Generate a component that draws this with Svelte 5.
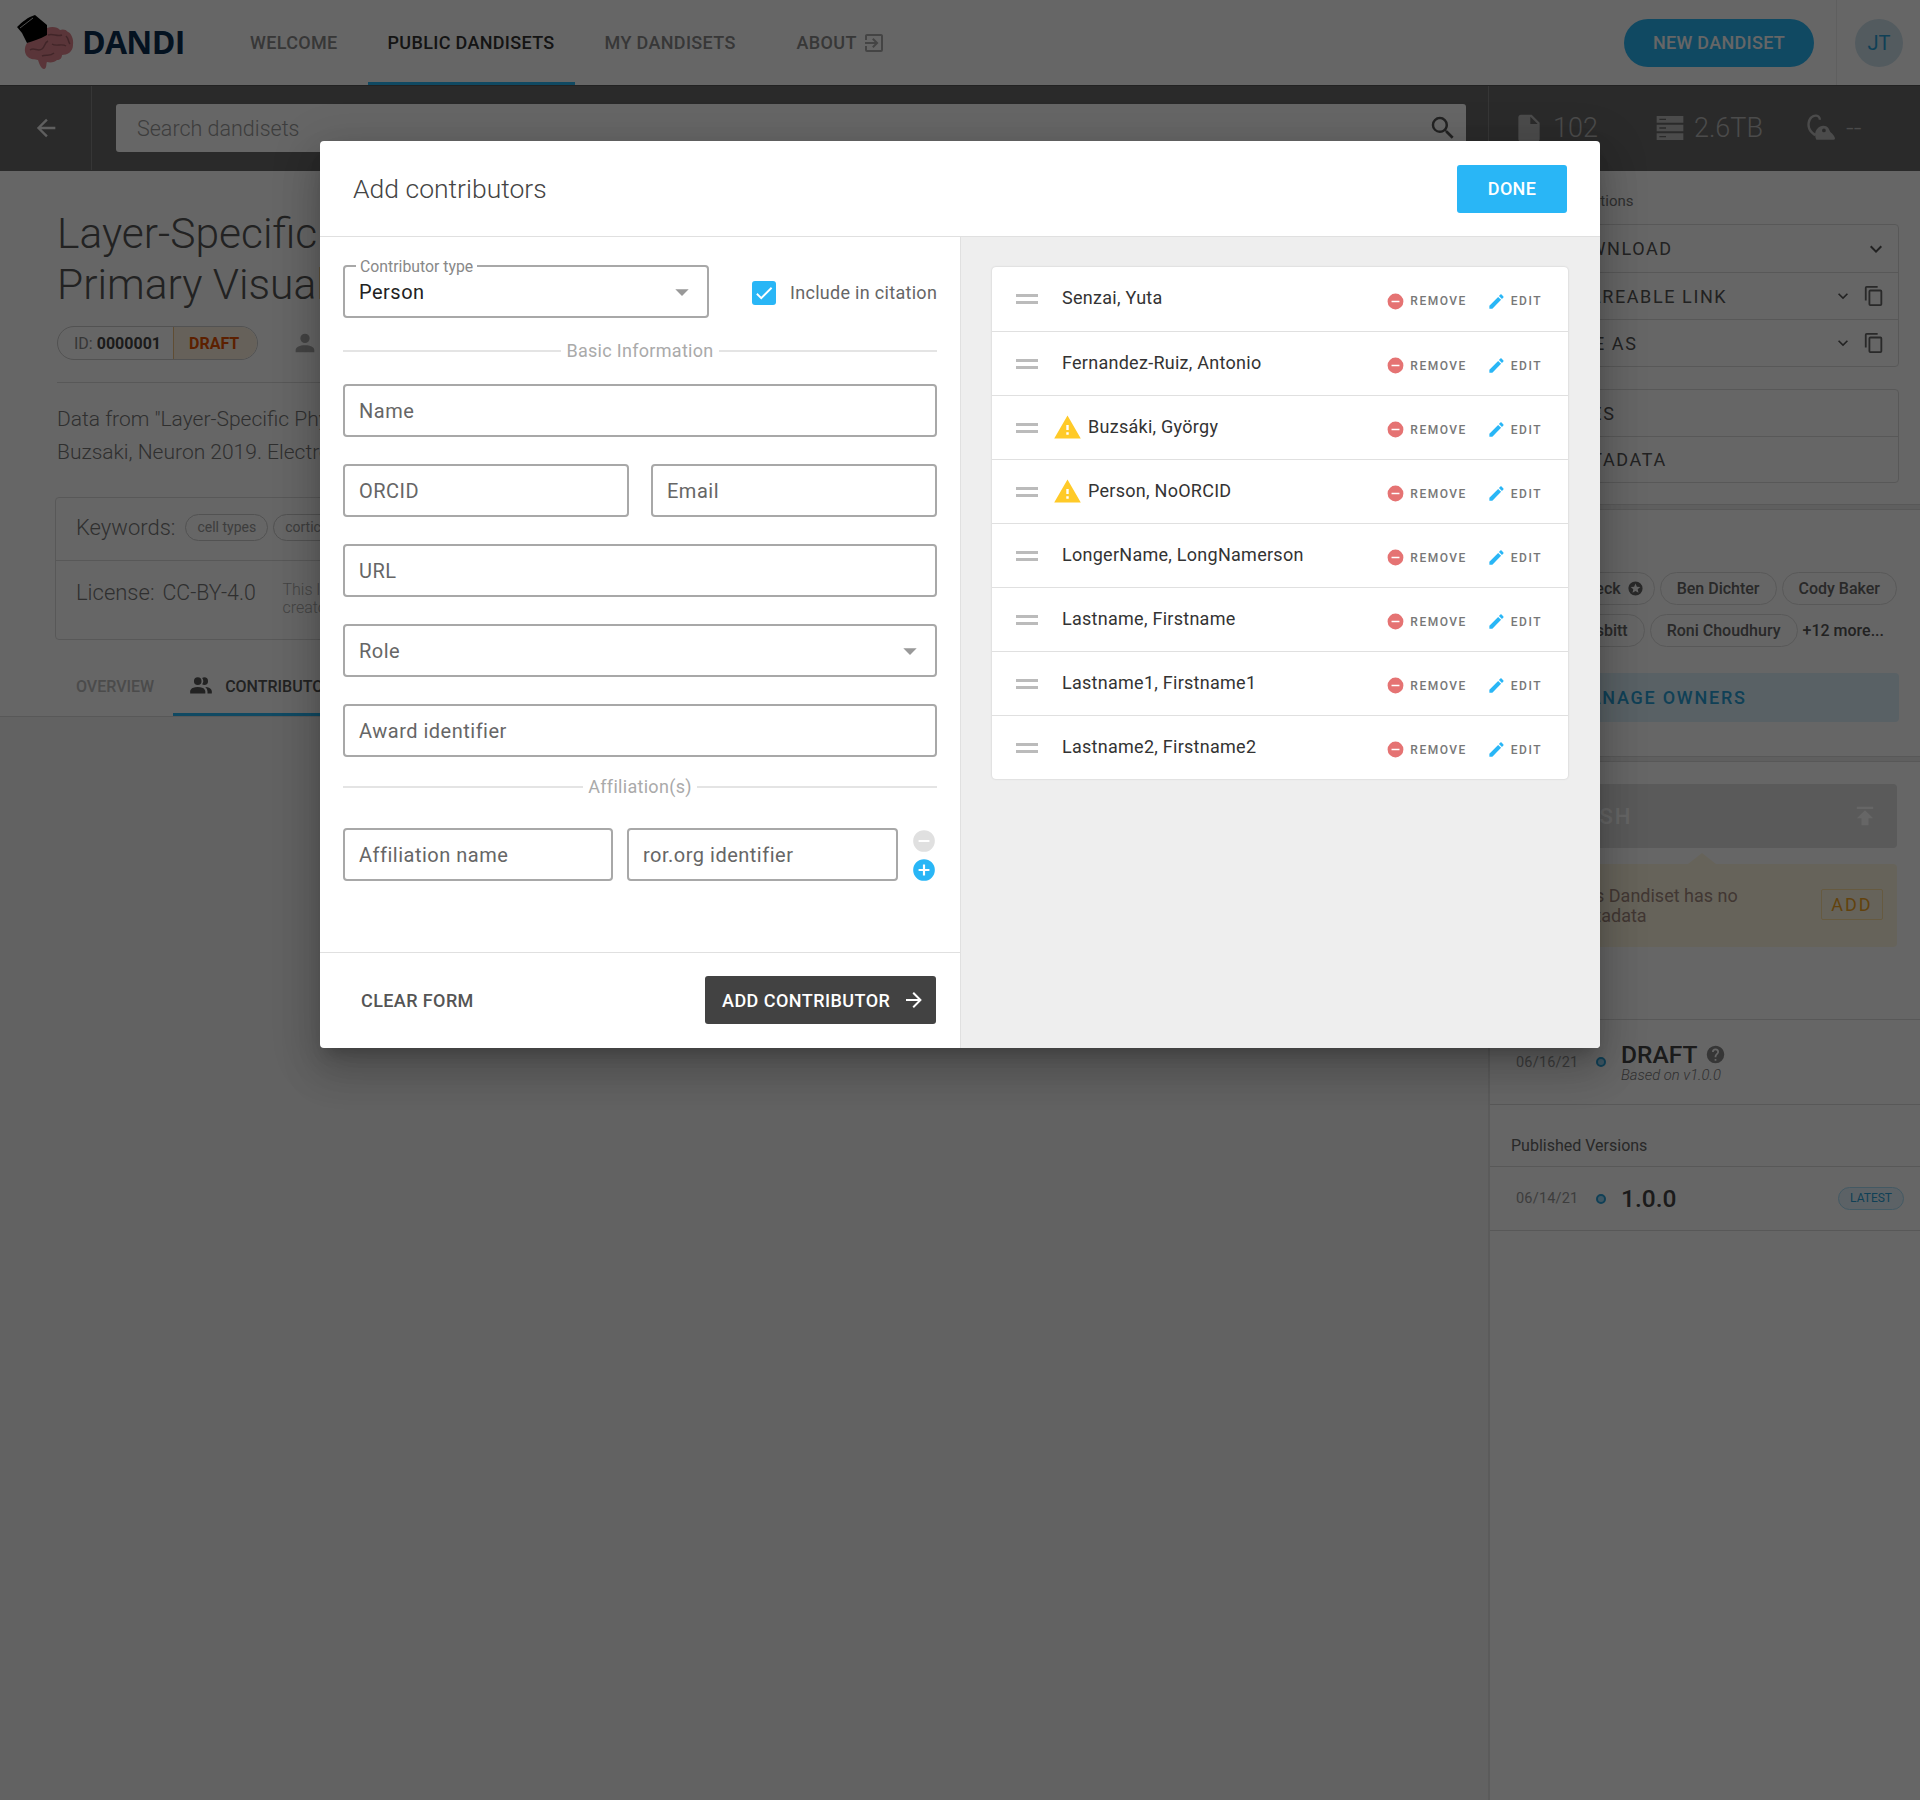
<script>
	const icons = {
		arrowLeft: 'M20,11V13H8L13.5,18.5L12.08,19.92L4.16,12L12.08,4.08L13.5,5.5L8,11H20Z',
		arrowRight: 'M4,11V13H16L10.5,18.5L11.92,19.92L19.84,12L11.92,4.08L10.5,5.5L16,11H4Z',
		search: 'M9.5,3A6.5,6.5 0 0,1 16,9.5C16,11.11 15.41,12.59 14.44,13.73L14.71,14H15.5L20.5,19L19,20.5L14,15.5V14.71L13.73,14.44C12.59,15.41 11.11,16 9.5,16A6.5,6.5 0 0,1 3,9.5A6.5,6.5 0 0,1 9.5,3M9.5,5C7,5 5,7 5,9.5C5,12 7,14 9.5,14C12,14 14,12 14,9.5C14,7 12,5 9.5,5Z',
		file: 'M13,9V3.5L18.5,9M6,2C4.89,2 4,2.89 4,4V20A2,2 0 0,0 6,22H18A2,2 0 0,0 20,20V8L14,2H6Z',
		server: 'M2,3H22V8H2V3M2,9.5H22V14.5H2V9.5M2,16H22V21H2V16M4,5V6H9V5H4M4,11.5V12.5H9V11.5H4M4,18V19H9V18H4Z',
		rodent: 'M8,22C5,16 9,10 14,10C18,10 19,13 20,15.5C22,17 24,19.5 24,21C24,22 23,22 22,22ZM14.5,12.5A1.6,1.6 0 1,0 14.5,15.7A1.6,1.6 0 1,0 14.5,12.5ZM6.5,19C2,16 -0.5,12 .5,7C1.3,2.5 5,0 8,.5C11,1 12,3 12,5L10,5C10,3.5 9.3,2.6 7.7,2.4C5.5,2.2 3.2,4 2.5,7.5C1.8,11.5 3.6,14.6 7.5,17Z',
		exit: 'M19,3H5C3.89,3 3,3.89 3,5V9H5V5H19V19H5V15H3V19A2,2 0 0,0 5,21H19A2,2 0 0,0 21,19V5C21,3.89 20.1,3 19,3M10.08,15.58L11.5,17L16.5,12L11.5,7L10.08,8.41L12.67,11H3V13H12.67L10.08,15.58Z',
		account: 'M12,4A4,4 0 0,1 16,8A4,4 0 0,1 12,12A4,4 0 0,1 8,8A4,4 0 0,1 12,4M12,14C16.42,14 20,15.79 20,18V20H4V18C4,15.79 7.58,14 12,14Z',
		accounts: 'M16 17V19H2V17S2 13 9 13 16 17 16 17M12.5 7.5A3.5 3.5 0 1 0 9 11A3.5 3.5 0 0 0 12.5 7.5M15.94 13A5.32 5.32 0 0 1 18 17V19H22V17S22 13.37 15.94 13M15 4A3.39 3.39 0 0 0 13.07 4.59A5 5 0 0 1 13.07 10.41A3.39 3.39 0 0 0 15 11A3.5 3.5 0 0 0 15 4Z',
		pencil: 'M20.71,7.04C21.1,6.65 21.1,6 20.71,5.63L18.37,3.29C18,2.9 17.35,2.9 16.96,3.29L15.12,5.12L18.87,8.87M3,17.25V21H6.75L17.81,9.93L14.06,6.18L3,17.25Z',
		minus: 'M17,13H7V11H17M12,2A10,10 0 0,0 2,12A10,10 0 0,0 12,22A10,10 0 0,0 22,12A10,10 0 0,0 12,2Z',
		plus: 'M17,13H13V17H11V13H7V11H11V7H13V11H17M12,2A10,10 0 0,0 2,12A10,10 0 0,0 12,22A10,10 0 0,0 22,12A10,10 0 0,0 12,2Z',
		alert: 'M13,14H11V10H13M13,18H11V16H13M1,21H23L12,2L1,21Z',
		check: 'M21,7L9,19L3.5,13.5L4.91,12.09L9,16.17L19.59,5.59L21,7Z',
		chevron: 'M7.41,8.58L12,13.17L16.59,8.58L18,10L12,16L6,10L7.41,8.58Z',
		copy: 'M19,21H8V7H19M19,5H8A2,2 0 0,0 6,7V21A2,2 0 0,0 8,23H19A2,2 0 0,0 21,21V7A2,2 0 0,0 19,5M16,1H4A2,2 0 0,0 2,3V17H4V3H16V1Z',
		publish: 'M5,4V6H19V4H5M5,14H9V20H15V14H19L12,7L5,14Z',
		help: 'M15.07,11.25L14.17,12.17C13.45,12.89 13,13.5 13,15H11V14.5C11,13.39 11.45,12.39 12.17,11.67L13.41,10.41C13.78,10.05 14,9.55 14,9C14,7.89 13.1,7 12,7A2,2 0 0,0 10,9H8A4,4 0 0,1 12,5A4,4 0 0,1 16,9C16,9.88 15.64,10.67 15.07,11.25M13,19H11V17H13M12,2A10,10 0 0,0 2,12A10,10 0 0,0 12,22A10,10 0 0,0 22,12C22,6.47 17.5,2 12,2Z',
		star: 'M16.23,18L12,15.45L7.77,18L8.89,13.19L5.16,9.96L10.08,9.54L12,5L13.92,9.53L18.84,9.95L15.11,13.18L16.23,18M12,2C6.47,2 2,6.47 2,12A10,10 0 0,0 12,22A10,10 0 0,0 22,12A10,10 0 0,0 12,2Z',
		caret: 'M7,10L12,15L17,10H7Z'
	};

	const contributors = [
		{ name: 'Senzai, Yuta' },
		{ name: 'Fernandez-Ruiz, Antonio' },
		{ name: 'Buzsáki, György', warn: true },
		{ name: 'Person, NoORCID', warn: true },
		{ name: 'LongerName, LongNamerson' },
		{ name: 'Lastname, Firstname' },
		{ name: 'Lastname1, Firstname1' },
		{ name: 'Lastname2, Firstname2' }
	];
</script>

{#snippet icon(name, cls)}
	<svg class="icon {cls}" viewBox="0 0 24 24" aria-hidden="true"><path d={icons[name]} /></svg>
{/snippet}

<div class="page">
	<header class="appbar">
		<svg class="logo" viewBox="0 0 76 85" aria-hidden="true">
			<path class="brain" d="M47,28C42,34 35,40 27,43C24,47 24,54 28,57C31,60 35,59 38,60C39,63 41,69 44,69C47,69 46,63 47,62C51,63 55,62 57,60C60,60 62,58 62,55C67,55 73,52 73,45C74,39 71,33 68,32C66,29 62,29 60,30C58,27 52,26 47,28Z" />
			<path class="fold" d="M30,50C34,47 38,52 42,49C45,47 44,43 48,41M48,35C53,33 57,37 62,35M52,44C56,47 62,43 66,46M42,56C46,54 50,57 54,53M66,36C69,39 68,42 70,44" />
			<path class="hat" d="M17,27C22,22 28,17 35,15L47,25L47,35C40,39 33,41 27,43L22,33Z" />
			<path class="hatband" d="M20,28L33,18" />
		</svg>
		<span class="brand">DANDI</span>
		<nav class="nav">
			<span class="tab">Welcome</span>
			<span class="tab active">Public Dandisets</span>
			<span class="tab">My Dandisets</span>
			<span class="tab about">About {@render icon('exit', 'exit')}</span>
		</nav>
		<button class="new">New Dandiset</button>
		<div class="user"><span class="avatar">JT</span></div>
	</header>

	<div class="toolbar">
		<div class="back">{@render icon('arrowLeft', 'i28')}</div>
		<div class="search">
			<span>Search dandisets</span>
			{@render icon('search', 'i30')}
		</div>
		<div class="stats">
			<span class="stat">{@render icon('file', 'i32')}102</span>
			<span class="stat second">{@render icon('server', 'i32')}2.6TB</span>
			<span class="stat third">{@render icon('rodent', 'i28')}--</span>
		</div>
	</div>

	<div class="content">
		<main>
			<section class="meta">
				<h1>Layer-Specific Physiological Features and Interlaminar Interactions in the Primary Visual Cortex</h1>
				<div class="idline">
					<span class="idchip">
						<span class="id">ID: <b>0000001</b></span>
						<span class="draft">DRAFT</span>
					</span>
					{@render icon('account', 'person')}
				</div>
				<p class="desc">Data from "Layer-Specific Physiological Features and Interlaminar Interactions in the Primary Visual Cortex", Senzai, Fernandez-Ruiz,<br />Buzsaki, Neuron 2019. Electrophysiological recordings in mice.</p>
				<div class="infobox">
					<div class="keywords">
						<span class="infolabel">Keywords:</span>
						<span class="kw">cell types</span>
						<span class="kw">cortical layers</span>
					</div>
					<div class="license">
						<span class="infolabel">License:</span>
						<span class="infovalue">CC-BY-4.0</span>
						<span class="licnote">This license allows reusers to distribute, remix and build upon the material, so long as attribution is given to the<br />creator.</span>
					</div>
				</div>
				<div class="tabs">
					<span class="ptab">Overview</span>
					<span class="ptab on">{@render icon('accounts', 'i26')}Contributors</span>
				</div>
			</section>
		</main>

		<aside>
			<section class="actions">
				<div class="actlabel">Dandiset Actions</div>
				<div class="actbox">
					<div class="actrow"><span>Download</span>{@render icon('chevron', 'i24 last')}</div>
					<div class="actrow"><span>Shareable Link</span>{@render icon('chevron', 'i20')}{@render icon('copy', 'i22 cp')}</div>
					<div class="actrow"><span>Cite As</span>{@render icon('chevron', 'i20')}{@render icon('copy', 'i22 cp')}</div>
				</div>
				<div class="actbox second">
					<div class="actrow"><span>Files</span></div>
					<div class="actrow"><span>Metadata</span></div>
				</div>
			</section>
			<div class="band"></div>
			<section class="owners">
				<div class="chips">
					<span class="chip starred">Beck {@render icon('star', 'i17')}</span>
					<span class="chip">Ben Dichter</span>
					<span class="chip">Cody Baker</span>
				</div>
				<div class="chips second">
					<span class="chip">Jacob Nesbitt</span>
					<span class="chip">Roni Choudhury</span>
					<span class="more">+12 more...</span>
				</div>
				<div class="manage">Manage Owners</div>
			</section>
			<div class="band"></div>
			<section class="publish">
				<div class="pubbtn"><span>Publish</span>{@render icon('publish', 'i28')}</div>
				<div class="notice">
					<span class="noticetext">This Dandiset has no<br />metadata</span>
					<span class="add">Add</span>
				</div>
			</section>
			<div class="version draftrow">
				<span class="date">06/16/21</span>
				<span class="dot"></span>
				<div>
					<div class="vname">DRAFT {@render icon('help', 'i21')}</div>
					<div class="based">Based on v1.0.0</div>
				</div>
			</div>
			<div class="pubhead">Published Versions</div>
			<div class="version">
				<span class="date">06/14/21</span>
				<span class="dot"></span>
				<span class="vname">1.0.0</span>
				<span class="latest">Latest</span>
			</div>
		</aside>
	</div>

	<div class="overlay">
		<div class="modal">
			<div class="modalhead">
				<h2>Add contributors</h2>
				<button class="done">Done</button>
			</div>
			<div class="modalbody">
				<div class="left">
					<form class="form">
						<div class="typeline">
							<fieldset class="select">
								<legend>Contributor type</legend>
								<span class="value">Person</span>
								{@render icon('caret', 'i32 caret')}
							</fieldset>
							<label class="citation">
								<span class="checkbox">{@render icon('check', 'i22')}</span>
								Include in citation
							</label>
						</div>
						<div class="rule first"><span>Basic Information</span></div>
						<div class="field">Name</div>
						<div class="pair">
							<div class="field">ORCID</div>
							<div class="field">Email</div>
						</div>
						<div class="field">URL</div>
						<div class="field role">Role {@render icon('caret', 'i32 caret')}</div>
						<div class="field">Award identifier</div>
						<div class="rule"><span>Affiliation(s)</span></div>
						<div class="affil">
							<div class="field">Affiliation name</div>
							<div class="field">ror.org identifier</div>
							<div class="affilbtns">
								{@render icon('minus', 'i26 off')}
								{@render icon('plus', 'i26 on')}
							</div>
						</div>
					</form>
					<div class="formfoot">
						<span class="clear">Clear Form</span>
						<button class="addc" type="button">Add Contributor {@render icon('arrowRight', 'i24')}</button>
					</div>
				</div>
				<div class="right">
					<ul class="list">
						{#each contributors as c}
							<li>
								<span class="handle"></span>
								{#if c.warn}
									{@render icon('alert', 'warn')}
								{/if}
								<span class="cname">{c.name}</span>
								<span class="act remove">{@render icon('minus', 'i19')}Remove</span>
								<span class="act edit">{@render icon('pencil', 'i19')}Edit</span>
							</li>
						{/each}
					</ul>
				</div>
			</div>
		</div>
	</div>
</div>

<style>
	:global(body) {
		font-family: Roboto, 'Liberation Sans', sans-serif;
		background: #f5f5f5;
	}
	* {
		box-sizing: border-box;
	}
	.page {
		position: relative;
		width: 1920px;
		height: 1800px;
		overflow: hidden;
	}
	.icon {
		width: 24px;
		height: 24px;
		fill: currentColor;
		flex: none;
	}
	.icon.i17 { width: 17px; height: 17px; }
	.icon.i19 { width: 19px; height: 19px; }
	.icon.i20 { width: 20px; height: 20px; }
	.icon.i21 { width: 21px; height: 21px; }
	.icon.i22 { width: 22px; height: 22px; }
	.icon.i26 { width: 26px; height: 26px; }
	.icon.i28 { width: 28px; height: 28px; }
	.icon.i30 { width: 30px; height: 30px; }
	.icon.i32 { width: 32px; height: 32px; }

	/* app bar */
	.appbar {
		height: 85px;
		background: #fff;
		display: flex;
		align-items: center;
	}
	.logo {
		width: 76px;
		height: 85px;
		flex: none;
	}
	.logo .brain { fill: #e0868e; }
	.logo .fold { fill: none; stroke: #a45e66; stroke-width: 1.5; }
	.logo .hat { fill: #000; }
	.logo .hatband { fill: none; stroke: #ccc; stroke-width: 1; }
	.brand {
		font-family: 'Open Sans', sans-serif;
		font-weight: 700;
		font-size: 32px;
		letter-spacing: -0.7px;
		color: #0a2e50;
		margin: -2px 0 0 6px;
		width: 148px;
	}
	.nav {
		display: flex;
		height: 85px;
		gap: 10px;
		flex: 1;
	}
	.tab {
		padding: 0 20px;
		display: flex;
		align-items: center;
		gap: 8px;
		font-size: 18px;
		font-weight: 500;
		letter-spacing: 0.33px;
		text-transform: uppercase;
		color: #8a8a8a;
	}
	.tab.active {
		color: #333;
		border-bottom: 3px solid #29b6f6;
		padding-top: 3px;
	}
	.tab.about {
		margin-left: 11px;
	}
	.tab .exit {
		width: 24px;
		height: 24px;
		margin-left: -3px;
		color: #aaa;
	}
	.new {
		width: 190px;
		height: 48px;
		border: 0;
		border-radius: 24px;
		background: #29b6f6;
		color: #fff;
		font: 500 18px Roboto, sans-serif;
		letter-spacing: 0.3px;
		text-transform: uppercase;
		padding: 0;
	}
	.user {
		margin-left: 22px;
		border-left: 1px solid #eee;
		height: 85px;
		width: 84px;
		padding-left: 18px;
		display: flex;
		align-items: center;
	}
	.avatar {
		width: 48px;
		height: 48px;
		border-radius: 50%;
		background: #cfe3ee;
		color: #29a0d8;
		font-size: 20px;
		display: flex;
		align-items: center;
		justify-content: center;
	}

	/* toolbar */
	.toolbar {
		height: 86px;
		background: #696969;
		display: flex;
		align-items: center;
		border-top: 1px solid #555;
		padding-bottom: 1px;
		color: #eee;
	}
	.back {
		width: 92px;
		height: 100%;
		border-right: 1px solid #888;
		display: flex;
		align-items: center;
		justify-content: center;
	}
	.search {
		width: 1350px;
		height: 48px;
		margin-left: 24px;
		background: #fff;
		border-radius: 3px;
		display: flex;
		align-items: center;
		justify-content: space-between;
		padding: 0 8px 0 21px;
		font-size: 21.5px;
		font-weight: 300;
		color: #999;
	}
	.search .icon {
		color: #555;
	}
	.stats {
		width: 432px;
		height: 100%;
		margin-left: 22px;
		border-left: 1px solid #888;
		padding-left: 24px;
		display: flex;
		align-items: center;
		font-size: 27px;
		font-weight: 300;
	}
	.stat {
		display: flex;
		align-items: center;
		gap: 8px;
		color: #bbb;
	}
	.stat.second { margin-left: 56px; }
	.stat.third { margin-left: 44px; gap: 11px; }

	/* page content */
	.content {
		display: grid;
		grid-template-columns: 1488px 432px;
		height: 1629px;
	}
	.meta {
		height: 546px;
		background: #fff;
		padding: 37px 0 0 57px;
		border-bottom: 1px solid #ddd;
		overflow: hidden;
		color: #888;
	}
	h1 {
		margin: 0;
		font-size: 42.5px;
		line-height: 51px;
		font-weight: 300;
		color: #555;
		width: 1380px;
	}
	.idline {
		margin-top: 16px;
		display: flex;
		align-items: center;
		padding-bottom: 22px;
		border-bottom: 1px solid #ddd;
	}
	.idchip {
		display: flex;
		height: 34px;
		border: 1px solid #ccc;
		border-radius: 17px;
		overflow: hidden;
		font-size: 16px;
	}
	.id {
		padding: 0 12px 0 16px;
		display: flex;
		align-items: center;
		gap: 4px;
		color: #888;
	}
	.id b { color: #444; }
	.draft {
		background: #fff3e0;
		border-left: 1px solid #f0c080;
		color: #e65100;
		font-weight: 700;
		padding: 0 18px 0 15px;
		display: flex;
		align-items: center;
	}
	.person {
		width: 28px;
		height: 28px;
		margin-left: 33px;
		color: #aaa;
	}
	.desc {
		margin: 20px 0 0;
		font-size: 21px;
		line-height: 33px;
		font-weight: 300;
		width: 1380px;
		color: #777;
	}
	.infobox {
		margin: 28px 0 0 -2px;
		width: 1380px;
		height: 143px;
		border: 1px solid #ddd;
		border-radius: 4px;
	}
	.keywords {
		height: 63px;
		padding: 0 20px 3px;
		border-bottom: 1px solid #ddd;
		display: flex;
		align-items: center;
		gap: 5px;
	}
	.infolabel {
		font-size: 22px;
		font-weight: 300;
		margin-right: 8px;
		color: #777;
	}
	.kw {
		height: 27px;
		padding: 0 11px;
		margin-left: -3px;
		border: 1px solid #ccc;
		border-radius: 14px;
		font-size: 14px;
		line-height: 25px;
		color: #999;
	}
	.kw + .kw {
		margin-left: 0;
	}
	.license {
		padding: 19px 20px;
		display: flex;
		align-items: flex-start;
	}
	.infovalue {
		font-size: 21.3px;
		line-height: 26px;
		font-weight: 300;
		color: #777;
		width: 120px;
	}
	.licnote {
		font-size: 16px;
		line-height: 18px;
		font-weight: 300;
		width: 1000px;
		margin-top: 1px;
		color: #aaa;
	}
	.tabs {
		margin: 16px 0 0 -57px;
		display: flex;
		padding-left: 60px;
	}
	.ptab {
		height: 60px;
		padding: 0 16px;
		display: flex;
		align-items: center;
		gap: 11px;
		font-size: 16px;
		font-weight: 500;
		text-transform: uppercase;
		color: #bbb;
	}
	.ptab.on {
		margin-left: 3px;
		width: 260px;
		padding: 3px 16px 0 15px;
		border-bottom: 3px solid #29b6f6;
		color: #555;
	}

	/* sidebar */
	aside {
		background: #fff;
		border-left: 2px solid #e4e4e4;
		color: #666;
	}
	.actions {
		height: 333px;
		padding: 20px 21px 0 20px;
	}
	.actlabel {
		font-size: 15px;
		line-height: 20px;
		color: #777;
		margin: 0 0 13px 10px;
	}
	.actbox {
		border: 1px solid #ddd;
		border-radius: 4px;
	}
	.actbox.second {
		margin-top: 22px;
	}
	.actrow {
		height: 47px;
		display: flex;
		align-items: center;
		padding: 0 13px 0 51px;
		font-size: 18px;
		letter-spacing: 1.6px;
		text-transform: uppercase;
		color: #555;
		gap: 10px;
	}
	.actbox.second .actrow {
		height: 46px;
	}
	.actrow + .actrow {
		border-top: 1px solid #ddd;
	}
	.actrow span {
		flex: 1;
	}
	.actrow .last {
		margin-right: -3px;
	}
	.cp {
		color: #666;
	}
	.band {
		height: 6px;
		background: #eee;
		border: solid #ddd;
		border-width: 1px 0;
	}
	.owners {
		height: 246px;
		padding: 62px 23px 0 0;
	}
	.chips {
		display: flex;
		justify-content: flex-end;
		gap: 5px;
		font-size: 16px;
		font-weight: 500;
	}
	.chips.second {
		margin-top: 9px;
		padding-right: 13px;
	}
	.chip {
		height: 33px;
		padding: 0 16px;
		border: 1px solid #ddd;
		border-radius: 17px;
		display: flex;
		align-items: center;
		gap: 8px;
		color: #666;
	}
	.chip.starred {
		padding-right: 10px;
		gap: 6px;
	}
	.more {
		line-height: 33px;
		color: #555;
	}
	.manage {
		margin: 26px -2px 0 20px;
		height: 49px;
		background: #def3fd;
		border-radius: 4px;
		color: #29a0d8;
		font-size: 18px;
		font-weight: 500;
		letter-spacing: 1.75px;
		text-transform: uppercase;
		display: flex;
		align-items: center;
		padding-left: 61px;
	}
	.publish {
		height: 258px;
		padding: 22px 23px 0 20px;
		border-bottom: 1px solid #ddd;
	}
	.pubbtn {
		height: 64px;
		background: #e0e0e0;
		border-radius: 4px;
		color: #fff;
		display: flex;
		align-items: center;
		justify-content: space-between;
		padding: 0 18px 0 19px;
		font-size: 22px;
		font-weight: 500;
		letter-spacing: 2px;
		text-transform: uppercase;
	}
	.notice {
		position: relative;
		margin-top: 16px;
		height: 83px;
		background: #fff8e1;
		border-radius: 4px;
		display: flex;
		align-items: center;
		justify-content: space-between;
		padding: 0 14px 0 60px;
		font-size: 18px;
		line-height: 20px;
		color: #a38a80;
	}
	.notice::before {
		content: '';
		position: absolute;
		left: 178px;
		top: -11px;
		border: solid transparent;
		border-width: 0 14px 11px;
		border-bottom-color: #fff8e1;
	}
	.add {
		width: 62px;
		height: 31px;
		border: 1px solid #ffe0a0;
		border-radius: 2px;
		font-size: 18px;
		letter-spacing: 2px;
		color: #f5a623;
		text-transform: uppercase;
		display: flex;
		align-items: center;
		justify-content: center;
		margin-top: -2px;
	}
	.version {
		height: 64px;
		display: flex;
		align-items: center;
		padding-left: 26px;
		border-bottom: 1px solid #ddd;
	}
	.version.draftrow {
		height: 85px;
	}
	.date {
		font-size: 14.5px;
		letter-spacing: 0.2px;
		color: #999;
		width: 80px;
	}
	.dot {
		width: 10px;
		height: 10px;
		border: 2px solid #29a0d8;
		border-radius: 50%;
		margin-right: 15px;
		background: #9fd8f5;
	}
	.vname {
		font-size: 24.5px;
		line-height: 27px;
		font-weight: 500;
		color: #444;
		display: flex;
		align-items: center;
		gap: 8px;
	}
	.vname .icon {
		color: #888;
	}
	.based {
		font-size: 14.8px;
		line-height: 15px;
		font-style: italic;
		font-weight: 300;
		color: #777;
	}
	.pubhead {
		height: 62px;
		padding: 31px 0 0 21px;
		font-size: 16px;
		color: #666;
		border-bottom: 1px solid #ddd;
	}
	.latest {
		margin-left: auto;
		margin-right: 16px;
		height: 23px;
		padding: 0 11px;
		border: 1px solid #a8def8;
		border-radius: 12px;
		background: #e6f6fe;
		font-size: 12px;
		line-height: 21px;
		text-transform: uppercase;
		color: #29a0d8;
	}

	/* modal */
	.overlay {
		position: absolute;
		inset: 0;
		background: rgba(0, 0, 0, 0.6);
		padding-top: 141px;
		display: flex;
		justify-content: center;
		align-items: flex-start;
	}
	.modal {
		width: 1280px;
		height: 907px;
		background: #fff;
		border-radius: 4px;
		box-shadow: 0 11px 15px -7px rgba(0, 0, 0, 0.2), 0 24px 38px 3px rgba(0, 0, 0, 0.14), 0 9px 46px 8px rgba(0, 0, 0, 0.12);
		display: flex;
		flex-direction: column;
		overflow: hidden;
	}
	.modalhead {
		height: 96px;
		flex: none;
		display: flex;
		align-items: center;
		justify-content: space-between;
		padding: 0 33px 0 33px;
		border-bottom: 1px solid #e0e0e0;
	}
	h2 {
		margin: 0;
		font-size: 26.5px;
		font-weight: 300;
		color: #444;
	}
	.done {
		width: 110px;
		height: 48px;
		border: 0;
		border-radius: 3px;
		background: #29b6f6;
		color: #fff;
		font: 500 18px Roboto, sans-serif;
		letter-spacing: 0.3px;
		text-transform: uppercase;
		padding: 0;
	}
	.modalbody {
		flex: 1;
		display: flex;
		min-height: 0;
	}
	.left {
		width: 641px;
		border-right: 1px solid #e0e0e0;
		display: flex;
		flex-direction: column;
	}
	.form {
		flex: 1;
		padding: 28px 23px 0;
		display: flex;
		flex-direction: column;
	}
	.typeline {
		display: flex;
		align-items: center;
	}
	.select {
		margin: 0;
		flex: none;
		width: 366px;
		height: 53px;
		padding: 0 14px;
		border: 2px solid #a8a8a8;
		border-radius: 4px;
		display: flex;
		align-items: center;
		justify-content: space-between;
		position: relative;
	}
	.select legend {
		position: absolute;
		top: -10px;
		left: 11px;
		padding: 0 4px;
		background: #fff;
		font-size: 15.8px;
		line-height: 20px;
		color: #888;
	}
	.value {
		font-size: 20px;
		letter-spacing: 0.5px;
		color: #222;
	}
	.caret {
		color: #999;
		margin-right: -5px;
	}
	.citation {
		margin: 2px 0 0 43px;
		display: flex;
		align-items: center;
		gap: 14px;
		font-size: 18px;
		letter-spacing: 0.3px;
		white-space: nowrap;
		color: #666;
	}
	.checkbox {
		width: 24px;
		height: 24px;
		border-radius: 3px;
		background: #29b6f6;
		color: #fff;
		display: flex;
		align-items: center;
		justify-content: center;
	}
	.rule {
		display: flex;
		align-items: center;
		gap: 5px;
		font-size: 18px;
		letter-spacing: 0.3px;
		color: #aaa;
		margin: 20px 0 10px;
		height: 20px;
	}
	.rule::before,
	.rule::after {
		content: '';
		flex: 1;
		height: 2px;
		background: #e4e4e4;
	}
	.rule.first {
		margin: 23px 0 23px;
	}
	.rule span {
		padding: 0 0 1px;
	}
	.field {
		height: 53px;
		flex: none;
		border: 2px solid #a8a8a8;
		border-radius: 4px;
		padding: 0 14px;
		font-size: 20px;
		letter-spacing: 0.5px;
		color: #666;
		display: flex;
		align-items: center;
		justify-content: space-between;
	}
	.field + .field,
	.pair + .field,
	.field + .pair {
		margin-top: 27px;
	}
	.pair {
		display: grid;
		grid-template-columns: 286px 286px;
		gap: 22px;
	}
	.pair .field {
		margin-top: 0;
	}
	.affil {
		display: grid;
		grid-template-columns: 270px 271px 26px;
		gap: 14px;
		margin-top: 21px;
	}
	.affil .field {
		margin-top: 0;
	}
	.affilbtns {
		display: flex;
		flex-direction: column;
		gap: 3px;
		margin-left: -1px;
	}
	.affilbtns .off {
		color: #e0e0e0;
	}
	.affilbtns .on {
		color: #29b6f6;
	}
	.formfoot {
		height: 96px;
		flex: none;
		border-top: 1px solid #e0e0e0;
		display: flex;
		align-items: center;
		justify-content: space-between;
		padding: 0 24px 0 41px;
	}
	.clear {
		font-size: 18px;
		font-weight: 500;
		letter-spacing: 0.4px;
		text-transform: uppercase;
		color: #555;
	}
	.addc {
		width: 231px;
		height: 48px;
		margin-top: -1px;
		border: 0;
		border-radius: 3px;
		background: #424242;
		color: #fff;
		font: 500 18px Roboto, sans-serif;
		letter-spacing: 0.45px;
		text-transform: uppercase;
		display: flex;
		align-items: center;
		justify-content: space-between;
		padding: 0 10px 0 17px;
	}
	.right {
		flex: 1;
		background: #eee;
		padding: 30px 32px 0 31px;
	}
	.list {
		list-style: none;
		margin: 0;
		padding: 0;
		background: #fff;
		border-radius: 4px;
		box-shadow: 0 0 2px rgba(0, 0, 0, 0.18);
	}
	.list li {
		height: 64px;
		display: flex;
		align-items: center;
		padding: 0 26px 0 24px;
	}
	.list li + li {
		border-top: 1px solid #e0e0e0;
	}
	.handle {
		width: 22px;
		height: 10px;
		border: solid #bbb;
		border-width: 3px 0;
		flex: none;
		margin-right: 24px;
	}
	.warn {
		width: 29px;
		height: 29px;
		color: #ffca28;
		margin: 0 6px 0 -9px;
	}
	.cname {
		flex: 1;
		font-size: 18px;
		letter-spacing: 0.27px;
		color: #333;
		margin-top: -3px;
	}
	.act {
		display: flex;
		align-items: center;
		gap: 5px;
		font-size: 12px;
		font-weight: 500;
		letter-spacing: 1.5px;
		text-transform: uppercase;
		color: #777;
		margin-top: 4px;
	}
	.remove .icon {
		color: #e57373;
	}
	.edit {
		margin-left: 20px;
	}
	.edit .icon {
		color: #29b6f6;
	}
</style>
